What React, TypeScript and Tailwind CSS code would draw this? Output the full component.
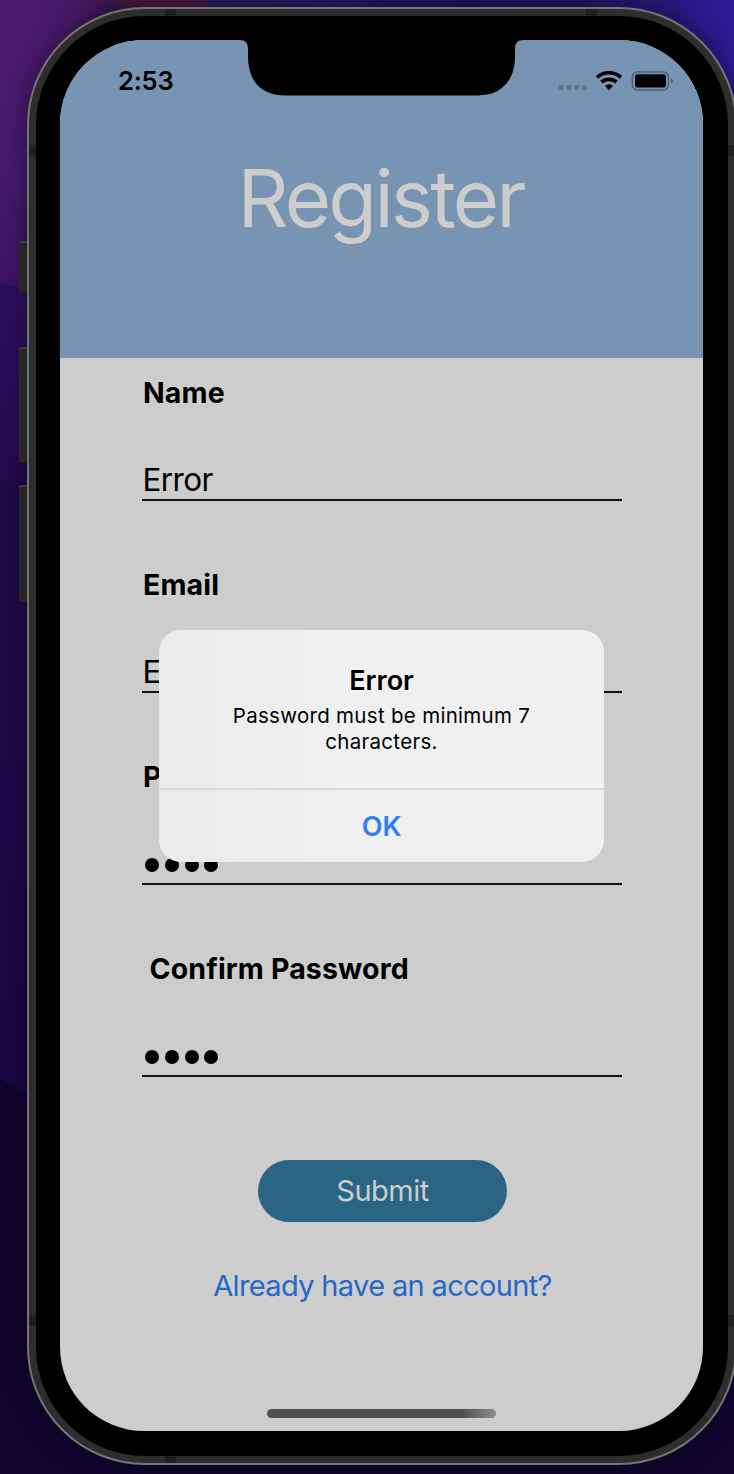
type FieldProps = { label: string; value?: string; dots?: number; indent?: boolean };

function Field({ label, value, dots = 0, indent = false }: FieldProps) {
  return (
    <div className="mb-[66.3px] flex w-[480px] flex-col">
      <label
        className={`h-9 whitespace-nowrap text-[28.5px] font-bold leading-9 tracking-[0.15px] ${indent ? "pl-[8px]" : "pl-[1.5px]"}`}
      >
        {label}
      </label>
      <div className="mt-[51px] flex h-[39px] items-center border-b-2 border-[#111] pl-px text-[31.5px] font-normal leading-9 tracking-[-0.6px]">
        {value}
        {dots > 0 && (
          <span className="flex gap-[5.8px] pl-[2.5px]">
            {Array.from({ length: dots }, (_, i) => (
              <span key={i} className="size-[14px] rounded-full bg-black" />
            ))}
          </span>
        )}
      </div>
    </div>
  );
}

function Wallpaper() {
  return (
    <svg className="absolute inset-0" width="734" height="1474" viewBox="0 0 734 1474" preserveAspectRatio="none">
      <defs>
        <linearGradient id="side" x1="0" y1="0" x2="0" y2="1">
          <stop offset="0" stopColor="#4d1a70" />
          <stop offset="0.5" stopColor="#471a70" />
          <stop offset="1" stopColor="#3b145e" />
        </linearGradient>
        <linearGradient id="mid" x1="0" y1="0" x2="0" y2="1">
          <stop offset="0" stopColor="#2b105c" />
          <stop offset="1" stopColor="#220a4c" />
        </linearGradient>
        <linearGradient id="low" x1="0" y1="0" x2="0" y2="1">
          <stop offset="0" stopColor="#1d0849" />
          <stop offset="1" stopColor="#190742" />
        </linearGradient>
        <linearGradient id="topRight" x1="0" y1="0" x2="1" y2="0">
          <stop offset="0" stopColor="#262063" />
          <stop offset="0.5" stopColor="#1e145c" />
          <stop offset="0.75" stopColor="#241668" />
          <stop offset="1" stopColor="#2f1995" />
        </linearGradient>
        <linearGradient id="topLeft" x1="0" y1="0" x2="1" y2="0">
          <stop offset="0" stopColor="#4d1a70" stopOpacity="0" />
          <stop offset="1" stopColor="#351446" />
        </linearGradient>
      </defs>
      <rect width="734" height="1474" fill="#10042f" />
      <rect width="734" height="300" fill="url(#side)" />
      <rect width="130" height="120" fill="url(#topLeft)" />
      <path d="M115 0H215L235 20H130Z" fill="#47193f" />
      <path d="M205 0H734V300H400L218 20Z" fill="url(#topRight)" />
      <path d="M0 283L60 295V490H0Z" fill="url(#mid)" />
      <path d="M0 482L60 494V770H0Z" fill="#200948" />
      <path d="M0 762L60 770V1110L0 1079Z" fill="url(#low)" />
    </svg>
  );
}

function StatusIcons() {
  return (
    <svg width="118" height="24" viewBox="0 0 118 24">
      <g fill="#5f7891">
        <rect x="2.5" y="15" width="5" height="5" rx="1.5" />
        <rect x="10.3" y="15" width="5" height="5" rx="1.5" />
        <rect x="18" y="15" width="5" height="5" rx="1.5" />
        <rect x="25.8" y="15" width="5" height="5" rx="1.5" />
      </g>
      <g fill="none" stroke="#000" strokeWidth="3.6">
        <path d="M41 7.4A18 18 0 0 1 65 7.4" />
        <path d="M45.5 12.2A11.4 11.4 0 0 1 60.5 12.2" />
      </g>
      <path d="M49 15.8A6.3 6.3 0 0 1 57 15.8L53 20.2Z" fill="#000" />
      <rect x="76.4" y="1.9" width="36" height="18" rx="5" fill="none" stroke="#4c6078" strokeWidth="1.5" />
      <rect x="79" y="4.3" width="31" height="13.2" rx="2.8" />
      <path d="M114.7 8.3C117.6 9.3 117.6 12.7 114.7 13.8Z" fill="#4c6078" />
    </svg>
  );
}

export default function App() {
  return (
    <main className="relative h-[1474px] w-[734px] overflow-hidden font-['Inter',sans-serif] text-black">
      <Wallpaper />
      <span className="absolute left-[19px] top-[241px] h-[52px] w-[10px] rounded-l-[3px] border-t-2 border-[#484848] bg-[#2e2e2e]" />
      <span className="absolute left-[19px] top-[347px] h-[116px] w-[10px] rounded-l-[3px] border-t-2 border-[#484848] bg-[#2e2e2e]" />
      <span className="absolute left-[19px] top-[485px] h-[117px] w-[10px] rounded-l-[3px] border-t-2 border-[#484848] bg-[#2e2e2e]" />

      <div className="relative ml-[27px] h-[1474px] w-[710px] pt-[7px]">
        <div className="relative h-[1458px] overflow-hidden rounded-[118px] border-2 border-[#747474] bg-[#2d2d2d] p-[7px] shadow-[0_0_20px_4px_rgba(0,0,0,0.35)]">
          <span className="absolute left-[136px] top-0 h-[7px] w-[11px] bg-[#202020]" />
          <span className="absolute left-[557px] top-0 h-[7px] w-[11px] bg-[#202020]" />
          <span className="absolute bottom-0 left-[136px] h-[7px] w-[11px] bg-[#202020]" />
          <span className="absolute left-0 top-[136px] h-[11px] w-[7px] bg-[#202020]" />
          <span className="absolute right-0 top-[136px] h-[11px] w-[7px] bg-[#202020]" />
          <span className="absolute bottom-[137px] left-0 h-[11px] w-[7px] bg-[#202020]" />
          <span className="absolute bottom-[137px] right-0 h-[11px] w-[7px] bg-[#202020]" />

          <div className="h-full rounded-[109px] bg-black px-6 pb-[25px] pt-6">
            <div className="relative flex h-[1391px] w-[643px] flex-col overflow-hidden rounded-[84px] bg-[#cdcdcd]">
              <header className="flex h-[317.5px] shrink-0 flex-col bg-[#7894b3]">
                <div className="flex h-[84px] items-start justify-between pl-[58px] pr-[29px] pt-[25px]">
                  <time className="text-[25.5px] font-semibold leading-8 tracking-[-0.2px]">2:53</time>
                  <div className="pt-[5px]">
                    <StatusIcons />
                  </div>
                </div>
                <h1 className="mt-[24px] pr-[2px] text-center text-[79.5px] font-normal leading-[100px] tracking-[-2.7px] text-[#cdcdcd]">
                  Register
                </h1>
              </header>

              <section className="flex flex-col items-center pt-[17px]">
                <Field label="Name" value="Error" />
                <Field label="Email" value="Error" />
                <Field label="Password" dots={4} />
                <Field label="Confirm Password" dots={4} indent />
              </section>

              <div className="mt-[16.5px] flex flex-col items-center pl-[2px]">
                <button className="h-[62px] w-[249px] rounded-full bg-[#2a6583] text-[29px] font-normal tracking-[-0.5px] text-[#cdcdcd]">
                  Submit
                </button>
                <a className="mt-[46px] whitespace-nowrap text-[29px] leading-9 tracking-[-0.65px] text-[#2667c8]">
                  Already have an account?
                </a>
              </div>

              <span className="absolute bottom-[13px] left-[207px] h-[9px] w-[229px] rounded-full bg-linear-to-r from-[#505050] from-85% to-[#8f8f8f]" />
            </div>
          </div>
        </div>

        <svg className="absolute left-[212px] top-[40px]" width="285" height="57" viewBox="0 0 285 57">
          <path d="M0 0C7 0 9 3 9 10V16C9 41 22 55.5 46 55.5H239C262 55.5 276 41 276 16V10C276 3 278 0 285 0Z" />
        </svg>

        <div
          role="alertdialog"
          className="absolute left-[132px] top-[630px] flex h-[232px] w-[445px] flex-col overflow-hidden rounded-[22px] bg-linear-to-r from-[#ebebeb] to-[#f0f0f0] to-40% text-center"
        >
          <div className="h-[158px] pt-[34px]">
            <h2 className="text-[27px] font-semibold leading-[34px]">Error</h2>
            <p className="mt-[5px] text-[20.5px] leading-[26px] tracking-[0.3px]">
              Password must be minimum 7
              <br />
              characters.
            </p>
          </div>
          <button className="h-[74px] border-t-2 border-[#d9d9d9] pt-[2px] text-[27px] font-semibold text-[#307ff7]">OK</button>
        </div>
      </div>
    </main>
  );
}
